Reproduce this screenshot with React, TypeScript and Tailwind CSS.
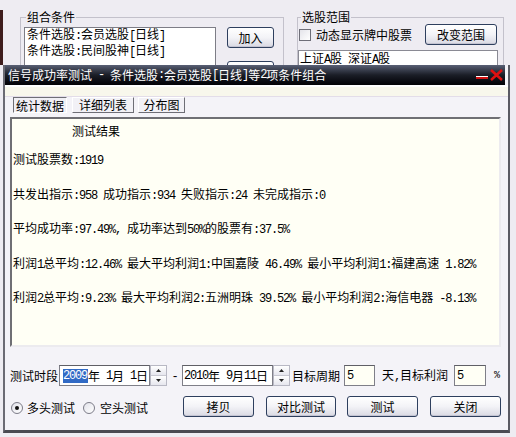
import React from 'react';

const mono = "font-['Liberation_Mono'] tracking-[-1.2px]";

// SimSun-like: CJK at 12px, ASCII at 6px advance
function Mx({ t }: { t: string }) {
  const parts = t.split(/([\x20-\x7e]+)/).filter(Boolean);
  return (
    <>
      {parts.map((p, i) =>
        /^[\x20-\x7e]+$/.test(p) ? (
          <span key={i} className={mono}>
            {p}
          </span>
        ) : (
          <span key={i}>{p}</span>
        )
      )}
    </>
  );
}

function Btn({ children, className = '' }: { children?: React.ReactNode; className?: string }) {
  return (
    <div
      className={`flex items-center justify-center h-[21px] shrink-0 rounded-[3px] border border-[#2e3f5e] bg-linear-to-b from-white via-[#f3f3f7] to-[#d9d9e3] shadow-[inset_0_-1px_0_#c4c4d2] ${className}`}
    >
      {children}
    </div>
  );
}

function Spin() {
  return (
    <div className="flex flex-col w-[17px] h-[21px] shrink-0 border border-[#b8b8c4] bg-[#f3f3f6]">
      <div className="flex-1 flex items-center justify-center border-b border-[#c8c8d2] bg-linear-to-b from-white to-[#e6e6ee]">
        <svg width="5" height="3" viewBox="0 0 5 3">
          <path d="M2.5 0L5 3H0z" fill="#222" />
        </svg>
      </div>
      <div className="flex-1 flex items-center justify-center bg-linear-to-b from-white to-[#e6e6ee]">
        <svg width="5" height="3" viewBox="0 0 5 3">
          <path d="M0 0H5L2.5 3z" fill="#222" />
        </svg>
      </div>
    </div>
  );
}

function Radio({ on }: { on?: boolean }) {
  return (
    <div className="w-[12px] h-[12px] shrink-0 rounded-full border border-[#7c7c88] bg-linear-to-br from-[#e2e2ea] to-white flex items-center justify-center">
      {on && <div className="w-[4px] h-[4px] rounded-full bg-[#111]" />}
    </div>
  );
}

const lines = [
  '共发出指示:958 成功指示:934 失败指示:24 未完成指示:0',
  '平均成功率:97.49%, 成功率达到50%的股票有:37.5%',
  '利润1总平均:12.46% 最大平均利润1:中国嘉陵 46.49% 最小平均利润1:福建高速 1.82%',
  '利润2总平均:9.23% 最大平均利润2:五洲明珠 39.52% 最小平均利润2:海信电器 -8.13%',
];

export default function App() {
  return (
    <div className="relative w-[516px] h-[437px] overflow-hidden bg-[#eeecf2] text-[12px] leading-[14px] text-black whitespace-pre font-['Noto_Sans_CJK_SC',sans-serif]">
      {/* parent window behind the dialog */}
      <div className="h-[65px] pt-[10px] overflow-hidden">
        <div className="h-[70px] border-l-[3px] border-[#3e1c1c] flex">
          <fieldset className="ml-[17px] w-[264px] h-[80px] border border-[#c3c1cb] px-[3px]">
            <legend className="ml-[2px] px-[1px] leading-[14px]">组合条件</legend>
            <div className="flex items-start mt-[3px]">
              <div className="w-[192px] h-[60px] border border-[#7d7d86] bg-white pl-[2px] leading-[14px]">
                <div className="-mt-px">
                  <Mx t="条件选股:会员选股[日线]" />
                </div>
                <div>
                  <Mx t="条件选股:民间股神[日线]" />
                </div>
              </div>
              <div className="ml-[11px] flex flex-col">
                <Btn className="w-[47px] h-[20px]">加入</Btn>
                <Btn className="w-[47px] mt-[13px]">删除</Btn>
              </div>
            </div>
          </fieldset>
          <fieldset className="ml-[13px] w-[207px] h-[80px] border border-[#c3c1cb]">
            <legend className="ml-[3px] px-[1px] leading-[14px]">选股范围</legend>
            <div className="flex items-center">
              <div className="ml-[1px] w-[12px] h-[12px] border border-[#6e6e78] bg-linear-to-br from-[#e4e4ea] to-white" />
              <span className="ml-[5px]">动态显示牌中股票</span>
              <Btn className="ml-[13px] w-[72px] h-[20px]">改变范围</Btn>
            </div>
            <div className="mt-[5px] w-[200px] h-[30px] border border-[#8a8a94] bg-white pl-[1px]">
              <Mx t="上证A股 深证A股" />
            </div>
          </fieldset>
        </div>
      </div>

      {/* dialog */}
      <div className="absolute left-[3px] top-[65px] w-[507px] h-[368px] bg-[#f4f3f8] border-l-2 border-r-2 border-b-[3px] border-l-[#6b6b74] border-r-[#5a5a63] border-b-[#4a4a52] flex flex-col">
        <div className="h-[20px] mr-[3px] flex items-center pl-[3px] text-white bg-linear-to-b from-[#596075] via-[#1b1e27] to-[#030306]">
          <Mx t="信号成功率测试 - 条件选股:会员选股[日线]等2项条件组合" />
          <svg className="ml-auto mr-[2px]" width="27" height="12" viewBox="0 0 27 12">
            <rect x="0" y="7" width="12" height="3" fill="#d01010" />
            <rect x="0" y="7" width="12" height="1" fill="#ffffff" />
            <path d="M15 1L26 11M26 1L15 11" stroke="#e01010" strokeWidth="2.5" />
          </svg>
        </div>
        <div className="h-[12px] border-t-2 border-white bg-[#f8f7ec] border-b border-b-[#e3dde9]" />

        {/* tabs */}
        <div className="flex ml-[8px] h-[16px]">
          <div className="w-[54px] flex items-center justify-center border border-t-[#6e6e76] border-l-[#6e6e76] border-r-white border-b-white bg-[#f0eff4] pt-[1px]">
            统计数据
          </div>
          <div className="ml-[5px] w-[62px] flex items-center justify-center border border-t-white border-l-white border-r-[#6e6e76] border-b-[#6e6e76] bg-[#f2f1f6]">
            详细列表
          </div>
          <div className="ml-[4px] w-[47px] flex items-center justify-center border border-t-white border-l-white border-r-[#6e6e76] border-b-[#6e6e76] bg-[#f2f1f6]">
            分布图
          </div>
        </div>

        {/* result area */}
        <div className="mt-[4px] ml-[5px] w-[491px] h-[230px] border-2 border-t-[#6f6f74] border-l-[#6f6f74] border-r-[#ecebef] border-b-[#ecebef] bg-[#fffff5] pl-[1px] pt-[3px]">
          <div className="pl-[59px] leading-[18px]">测试结果</div>
          <div className="mt-[3px] leading-[32.5px]">
            <div>
              <Mx t="测试股票数:1919" />
            </div>
            {lines.map((l) => (
              <div key={l}>
                <Mx t={l} />
              </div>
            ))}
          </div>
        </div>

        {/* period row */}
        <div className="mt-[18px] flex items-center h-[21px]">
          <span className="ml-[5px] w-[48px]">测试时段</span>
          <div className="ml-[1px] w-[91px] h-[21px] border border-[#7f7f88] border-t-[#5f5f66] bg-white flex items-center pl-[3px]">
            <span className={`${mono} bg-[#316ac5] text-white pr-[1px]`}>2009</span>
            <Mx t="年 1月 1日" />
          </div>
          <Spin />
          <span className="w-[15px] text-center">
            <span className={mono}>-</span>
          </span>
          <div className="w-[91px] h-[21px] border border-[#7f7f88] border-t-[#5f5f66] bg-white flex items-center pl-[1px]">
            <Mx t="2010年 9月11日" />
          </div>
          <Spin />
          <span className="ml-[2px]">目标周期</span>
          <div className="ml-[4px] w-[31px] h-[21px] border border-[#7f7f88] border-t-[#5f5f66] bg-[#fffff5] pl-[2px] pt-[1px]">
            <span className={mono}>5</span>
          </div>
          <span className="ml-[7px]">
            <Mx t="天,目标利润" />
          </span>
          <div className="ml-[6px] w-[32px] h-[21px] border border-[#7f7f88] border-t-[#5f5f66] bg-[#fffff5] pl-[2px] pt-[1px]">
            <span className={mono}>5</span>
          </div>
          <span className={`ml-[8px] text-[10px] ${mono}`}>%</span>
        </div>

        {/* buttons row */}
        <div className="mt-[10px] flex items-center h-[21px]">
          <div className="ml-[6px] mt-[2px]">
            <Radio on />
          </div>
          <span className="ml-[4px] mt-[2px]">多头测试</span>
          <div className="ml-[8px] mt-[2px]">
            <Radio />
          </div>
          <span className="ml-[5px] mt-[2px]">空头测试</span>
          <Btn className="ml-[35px] w-[71px]">拷贝</Btn>
          <Btn className="ml-[12px] w-[70px]">对比测试</Btn>
          <Btn className="ml-[11px] w-[71px]">测试</Btn>
          <Btn className="ml-[12px] w-[71px]">关闭</Btn>
        </div>
      </div>
    </div>
  );
}
